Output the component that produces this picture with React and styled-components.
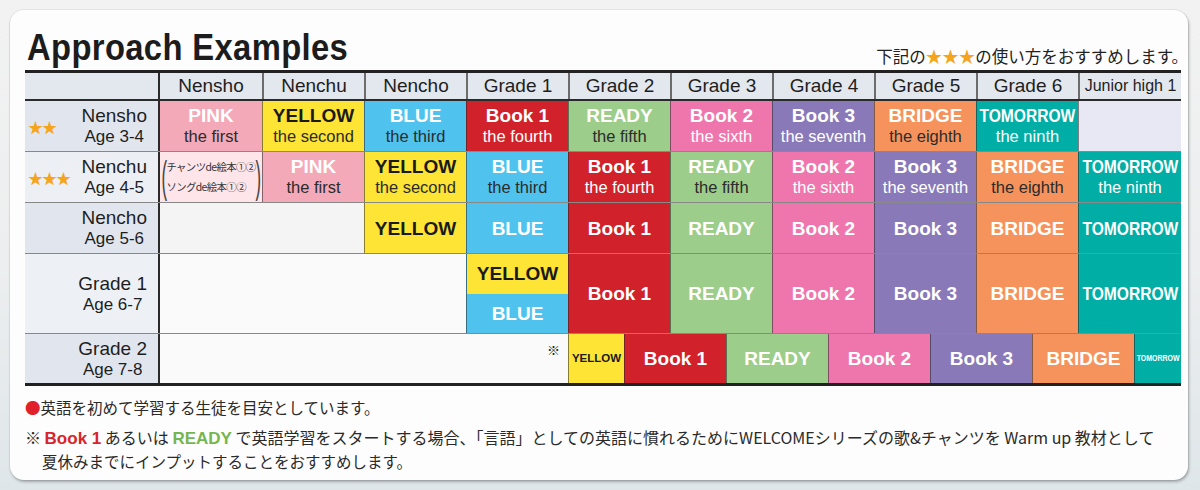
import styled, { createGlobalStyle } from "styled-components";

const GlobalStyle = createGlobalStyle`
  html, body { margin: 0; padding: 0; }
  body {
    width: 1200px;
    height: 490px;
    overflow: hidden;
    background: linear-gradient(180deg, #f2f2f2 0%, #eceeef 55%, #dfe6e9 100%);
    font-family: "Liberation Sans", Arial, "Noto Sans CJK JP", sans-serif;
    color: #222;
  }
`;

const JP = `"Noto Sans CJK JP", "Liberation Sans", sans-serif`;

const BOOKS = {
  pink: { name: "PINK", sub: "the first", bg: "#f4a9b9", fg: "#fff", sfg: "#2b2b2b" },
  yellow: { name: "YELLOW", sub: "the second", bg: "#fde435", fg: "#1a1a1a", sfg: "#2b2b2b" },
  blue: { name: "BLUE", sub: "the third", bg: "#4fc3ee", fg: "#fff", sfg: "#2b2b2b" },
  book1: { name: "Book 1", sub: "the fourth", bg: "#d1212a", fg: "#fff", sfg: "#fff" },
  ready: { name: "READY", sub: "the fifth", bg: "#9ccd8a", fg: "#fff", sfg: "#2b2b2b" },
  book2: { name: "Book 2", sub: "the sixth", bg: "#ef76ad", fg: "#fff", sfg: "#fff" },
  book3: { name: "Book 3", sub: "the seventh", bg: "#8979b8", fg: "#fff", sfg: "#fff" },
  bridge: { name: "BRIDGE", sub: "the eighth", bg: "#f6935d", fg: "#fff", sfg: "#2b2b2b" },
  tomorrow: { name: "TOMORROW", sub: "the ninth", bg: "#00aea6", fg: "#fff", sfg: "#fff", narrow: true },
};

const ORDER = ["pink", "yellow", "blue", "book1", "ready", "book2", "book3", "bridge", "tomorrow"];
const COLS = "135px repeat(9, 102px) 1fr";
const HEADS = ["Nensho", "Nenchu", "Nencho", "Grade 1", "Grade 2", "Grade 3", "Grade 4", "Grade 5", "Grade 6", "Junior high 1"];

const Page = styled.div`
  padding: 10px 12px 10px 10px;
`;

const Card = styled.div`
  height: 470px;
  box-sizing: border-box;
  background: #fdfdfd;
  border-radius: 14px;
  box-shadow: 1px 2px 3px rgba(0, 0, 0, 0.28), 0 0 0 1px rgba(0, 0, 0, 0.05);
  padding: 0 7px 0 15px;
`;

const TitleBar = styled.div`
  height: 60px;
  box-sizing: border-box;
  display: flex;
  align-items: flex-end;
  justify-content: space-between;
  padding: 0 0 4px 2px;
`;

const Title = styled.h1`
  margin: 0;
  font-size: 36px;
  line-height: 36px;
  font-weight: 700;
  color: #1c1c1c;
  letter-spacing: 0.4px;
  transform: scaleX(0.91);
  transform-origin: left center;
  white-space: nowrap;
`;

const Lead = styled.div`
  font-family: ${JP};
  font-size: 16.5px;
  line-height: 20px;
  color: #222;
  margin-right: -7px;
`;

const Star = styled.span`
  color: #f6a41c;
`;

const Table = styled.div`
  border-top: 3px solid #222;
  border-bottom: 3px solid #222;
`;

const Row = styled.div`
  display: grid;
  grid-template-columns: ${(p) => p.$cols || COLS};
  height: ${(p) => p.$h}px;
  box-sizing: border-box;
  border-bottom: 1px solid rgba(40, 40, 40, 0.55);
  &:last-child {
    border-bottom: none;
  }
`;

const HeadRow = styled(Row)`
  border-bottom: 2px solid #2a2a2a;
  background: #e3e7ee;
`;

const HeadCell = styled.div`
  display: flex;
  align-items: center;
  justify-content: center;
  font-size: ${(p) => (p.$small ? 16 : 19)}px;
  color: #1e1e1e;
  border-left: 2px solid #6c6c6c;
  white-space: nowrap;
  &:nth-child(2) {
    border-left: none;
  }
`;

const LabelCell = styled.div`
  display: flex;
  align-items: center;
  justify-content: space-between;
  background: ${(p) => p.$bg || "#e1e6ee"};
  border-right: 2px solid #2a2a2a;
  padding: 0 11px 0 3px;
`;

const Stars = styled.span`
  color: #f6a41c;
  font-size: 15px;
  letter-spacing: -1px;
`;

const LabelText = styled.div`
  text-align: center;
  color: #1e1e1e;
  span {
    display: block;
  }
  span:first-child {
    font-size: 19px;
    line-height: 21px;
  }
  span:last-child {
    font-size: 17px;
    line-height: 21px;
  }
`;

const Cell = styled.div`
  grid-column: span ${(p) => p.$span || 1};
  display: flex;
  flex-direction: column;
  align-items: ${(p) => p.$align || "center"};
  justify-content: ${(p) => p.$justify || "center"};
  background: ${(p) => p.$bg};
  border-left: 1px solid rgba(40, 40, 40, 0.55);
  overflow: hidden;
  &:nth-child(2) {
    border-left: none;
  }
`;

const Name = styled.span`
  display: inline-block;
  white-space: nowrap;
  font-weight: 700;
  font-size: ${(p) => p.$size || 19}px;
  line-height: 21px;
  color: ${(p) => p.$fg};
  transform: ${(p) => (p.$narrow ? "scaleX(0.82)" : "none")};
`;

const Sub = styled.span`
  font-size: 16.5px;
  line-height: 21px;
  color: ${(p) => p.$fg};
  white-space: nowrap;
`;

const Half = styled.div`
  flex: 1;
  align-self: stretch;
  display: flex;
  align-items: center;
  justify-content: center;
  background: ${(p) => p.$bg};
`;

const NoteBox = styled(Cell)`
  flex-direction: row;
  background: #fde5ea;
  color: #333;
`;

const Paren = styled.span`
  font-size: 44px;
  line-height: 44px;
  font-weight: 300;
  color: #444;
  transform: scaleX(0.38);
  margin: 0 -5px;
`;

const NoteLines = styled.div`
  font-family: ${JP};
  font-size: 10.4px;
  line-height: 20px;
  letter-spacing: -0.6px;
  white-space: nowrap;
  span {
    display: block;
  }
`;

const Mark = styled.span`
  font-family: ${JP};
  font-size: 13px;
  color: #222;
  padding: 6px 8px 0 0;
`;

const Notes = styled.div`
  font-family: ${JP};
  font-size: 15.5px;
  line-height: 22px;
  color: #2a2a2a;
  padding: 10px 0 0 0;
`;

const NoteLine = styled.p`
  margin: ${(p) => (p.$gap ? "8px" : "0")} 0 0 0;
  padding-left: ${(p) => (p.$indent ? "17px" : "0")};
  font-size: ${(p) => (p.$wide ? "16px" : "inherit")};
  white-space: nowrap;
`;

const Dot = styled.span`
  color: #e0202a;
`;

const Hl = styled.b`
  font-family: "Liberation Sans", Arial, sans-serif;
  font-size: 17px;
  color: ${(p) => p.$color};
`;

function BookCell({ id, sub, span, size }) {
  const b = BOOKS[id];
  return (
    <Cell $bg={b.bg} $span={span}>
      <Name $fg={b.fg} $narrow={b.narrow} $size={size}>
        {b.name}
      </Name>
      {sub && <Sub $fg={b.sfg}>{b.sub}</Sub>}
    </Cell>
  );
}

function Label({ name, age, stars, bg }) {
  return (
    <LabelCell $bg={bg}>
      <Stars>{stars}</Stars>
      <LabelText>
        <span>{name}</span>
        <span>{age}</span>
      </LabelText>
    </LabelCell>
  );
}

export default function App() {
  return (
    <>
      <GlobalStyle />
      <Page>
        <Card>
          <TitleBar>
            <Title>Approach Examples</Title>
            <Lead>
              下記の<Star>★★★</Star>の使い方をおすすめします。
            </Lead>
          </TitleBar>

          <Table>
            <HeadRow $h={28}>
              <LabelCell $bg="#e3e7ee" />
              {HEADS.map((h) => (
                <HeadCell key={h} $small={h.length > 8}>
                  {h}
                </HeadCell>
              ))}
            </HeadRow>

            <Row $h={51}>
              <Label name="Nensho" age="Age 3-4" stars="★★" bg="#e1e6ee" />
              {ORDER.map((id) => (
                <BookCell key={id} id={id} sub />
              ))}
              <Cell $bg="#e8e8f4" />
            </Row>

            <Row $h={51}>
              <Label name="Nenchu" age="Age 4-5" stars="★★★" bg="#eceff4" />
              <NoteBox>
                <Paren>(</Paren>
                <NoteLines>
                  <span>チャンツde絵本①②</span>
                  <span>ソングde絵本①②</span>
                </NoteLines>
                <Paren>)</Paren>
              </NoteBox>
              {ORDER.map((id) => (
                <BookCell key={id} id={id} sub />
              ))}
            </Row>

            <Row $h={51}>
              <Label name="Nencho" age="Age 5-6" bg="#e1e6ee" />
              <Cell $bg="#f4f4f4" $span={2} />
              {ORDER.slice(1).map((id) => (
                <BookCell key={id} id={id} />
              ))}
            </Row>

            <Row $h={80}>
              <Label name="Grade 1" age="Age 6-7" bg="#edf1f5" />
              <Cell $bg="#fafafa" $span={3} />
              <Cell $bg="#4fc3ee">
                <Half $bg={BOOKS.yellow.bg}>
                  <Name $fg="#1a1a1a">YELLOW</Name>
                </Half>
                <Half $bg={BOOKS.blue.bg}>
                  <Name $fg="#fff">BLUE</Name>
                </Half>
              </Cell>
              {ORDER.slice(3).map((id) => (
                <BookCell key={id} id={id} />
              ))}
            </Row>

            <Row $h={49} $cols="135px 408px 56px repeat(5, 102px) 1fr">
              <Label name="Grade 2" age="Age 7-8" bg="#e1e6ee" />
              <Cell $bg="#fafafa" $align="flex-end" $justify="flex-start">
                <Mark>※</Mark>
              </Cell>
              <BookCell id="yellow" size={11.5} />
              {ORDER.slice(3, 8).map((id) => (
                <BookCell key={id} id={id} />
              ))}
              <BookCell id="tomorrow" size={8.5} />
            </Row>
          </Table>

          <Notes>
            <NoteLine>
              <Dot>●</Dot>英語を初めて学習する生徒を目安としています。
            </NoteLine>
            <NoteLine $gap $wide>
              ※ <Hl $color="#d9232b">Book 1</Hl> あるいは <Hl $color="#76b64f">READY</Hl>{" "}
              で英語学習をスタートする場合、「言語」としての英語に慣れるためにWELCOMEシリーズの歌&amp;チャンツを Warm up 教材として
            </NoteLine>
            <NoteLine $indent>夏休みまでにインプットすることをおすすめします。</NoteLine>
          </Notes>
        </Card>
      </Page>
    </>
  );
}
